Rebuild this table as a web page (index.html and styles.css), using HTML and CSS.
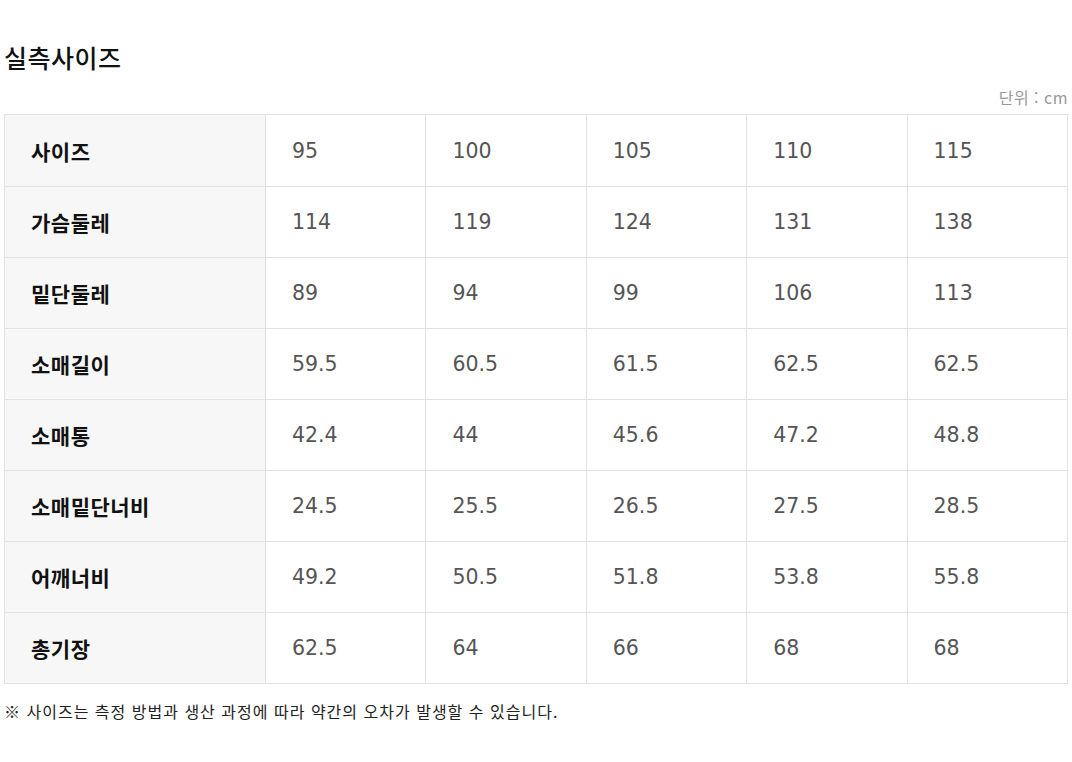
FILE: index.html
```html
<!DOCTYPE html>
<html lang="ko">
<head>
<meta charset="utf-8">
<link rel="stylesheet" href="styles.css">
</head>
<body>
<div class="wrap">
  <h2 class="title">실측사이즈</h2>
  <div class="unit">단위 : cm</div>
  <table class="size-table">
    <colgroup><col class="c-head"><col><col><col><col><col></colgroup>
    <tbody>
      <tr class="first"><th>사이즈</th><td>95</td><td>100</td><td>105</td><td>110</td><td>115</td></tr>
      <tr><th>가슴둘레</th><td>114</td><td>119</td><td>124</td><td>131</td><td>138</td></tr>
      <tr><th>밑단둘레</th><td>89</td><td>94</td><td>99</td><td>106</td><td>113</td></tr>
      <tr><th>소매길이</th><td>59.5</td><td>60.5</td><td>61.5</td><td>62.5</td><td>62.5</td></tr>
      <tr><th>소매통</th><td>42.4</td><td>44</td><td>45.6</td><td>47.2</td><td>48.8</td></tr>
      <tr><th>소매밑단너비</th><td>24.5</td><td>25.5</td><td>26.5</td><td>27.5</td><td>28.5</td></tr>
      <tr><th>어깨너비</th><td>49.2</td><td>50.5</td><td>51.8</td><td>53.8</td><td>55.8</td></tr>
      <tr><th>총기장</th><td>62.5</td><td>64</td><td>66</td><td>68</td><td>68</td></tr>
    </tbody>
  </table>
  <p class="note">※ 사이즈는 측정 방법과 생산 과정에 따라 약간의 오차가 발생할 수 있습니다.</p>
</div>
</body>
</html>
```

FILE: styles.css
```css
html, body {
  margin: 0;
  padding: 0;
  background: #fff;
}
body {
  font-family: "Noto Sans CJK KR", "Noto Sans", sans-serif;
  color: #111;
}
.wrap {
  padding: 40px 4px 0 4px;
}
.title {
  margin: 0;
  font-size: 25px;
  line-height: 34px;
  font-weight: 500;
  color: #111;
  letter-spacing: 0.5px;
}
.unit {
  margin-top: 13px;
  text-align: right;
  font-size: 16px;
  line-height: 20px;
  letter-spacing: 0.5px;
  color: #999;
  height: 20px;
  margin-bottom: 7px;
}
.size-table {
  width: 1064px;
  border-collapse: collapse;
  table-layout: fixed;
}
.c-head {
  width: 261px;
}
.size-table th,
.size-table td {
  border: 1px solid #e2e2e2;
  height: 71px;
  padding: 0 0 0 26px;
  text-align: left;
  vertical-align: middle;
  box-sizing: border-box;
}
.size-table .first th,
.size-table .first td {
  height: 72px;
}
.size-table th {
  background: #f7f7f7;
  font-size: 21px;
  font-weight: 700;
  letter-spacing: 0.5px;
  color: #111;
}
.size-table td {
  font-family: "DejaVu Sans", sans-serif;
  font-size: 20.5px;
  color: #555;
}
.note {
  margin: 16px 0 0 0;
  font-size: 16px;
  line-height: 22px;
  letter-spacing: 1px;
  color: #222;
}
```
